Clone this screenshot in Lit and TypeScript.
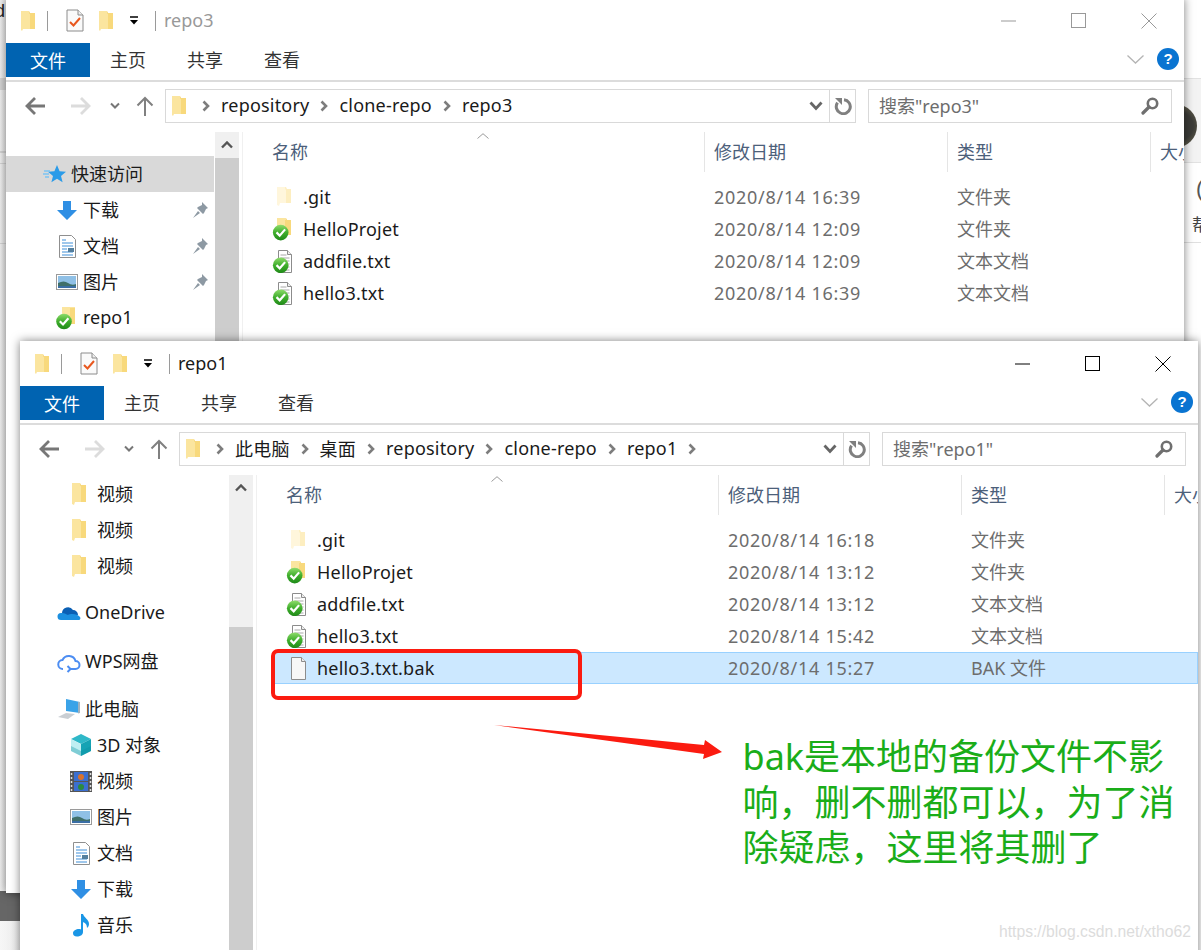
import { LitElement, html, css, svg, nothing } from "lit";
import { customElement, property } from "lit/decorators.js";

const folder = (pale = false) => svg`<svg class="ic" width="22" height="24" viewBox="0 0 22 24">
  <path d="M6 2h8l1 2h4v14H8z" fill="${pale ? "#fdf0c4" : "#f5d06a"}"/>
  <path d="M5 2h8v2l1 1v13H8l-1 3-2-1z" fill="${pale ? "#fff6dc" : "#fbe59f"}"/>
  <path d="M14 4h5v14h-5z" fill="${pale ? "#fdeec0" : "#f8d97c"}"/>
</svg>`;

const checkMark = (cx: number, cy: number) => svg`
  <defs><linearGradient id="ckg" x1="0" y1="0" x2="0" y2="1"><stop offset="0" stop-color="#8fdc6c"/><stop offset=".5" stop-color="#3fae2c"/><stop offset="1" stop-color="#1f8a18"/></linearGradient></defs>
  <circle cx="${cx}" cy="${cy}" r="7.8" fill="url(#ckg)"/>
  <path d="M${cx - 4.2} ${cy - .2}l3.200 3.200 5.400-6.200" fill="none" stroke="#fff" stroke-width="2.200"/>`;

const syncFolder = svg`<svg class="ic" width="22" height="24" viewBox="0 0 22 24">
  <path d="M6 1h8l1 2h4v15H8z" fill="#f5d06a"/><path d="M5 1h9v17H5z" fill="#fbe59f"/><path d="M13 3h6v15h-6z" fill="#f8d97c"/>
  ${checkMark(8.7, 15.6)}</svg>`;

const docLines = svg`<path d="M6.500 1.500h9l4 4v18h-13z" fill="#fff" stroke="#8c8c8c"/><path d="M15.500 1.500v4h4" fill="#eee" stroke="#8c8c8c"/>
  <path d="M8.500 6h6M8.500 9h9M8.500 12h9M8.500 15h9M8.500 18h9M8.500 21h9" stroke="#a9a9a9"/>`;

const syncDoc = svg`<svg class="ic" width="22" height="24" viewBox="0 0 22 24">${docLines}${checkMark(8.7, 16.3)}</svg>`;
const blankDoc = svg`<svg class="ic" width="22" height="24" viewBox="0 0 22 24"><path d="M5.500 1.500h10l4 4v18h-14z" fill="#f7f7f7" stroke="#8c8c8c"/><path d="M15.500 1.500v4h4" fill="#eee" stroke="#8c8c8c"/></svg>`;

const navDownload = svg`<svg class="ic" width="24" height="24" viewBox="0 0 24 24"><path d="M8 3h8v9h6l-10 10L2 12h6z" fill="#2f8fe4"/></svg>`;
const navDocs = svg`<svg class="ic" width="24" height="24" viewBox="0 0 24 24"><path d="M4.500 1.500h12l4 4v18h-16z" fill="#fff" stroke="#8f8f8f"/>
  <path d="M7 6h4M7 9h11M7 12h11M7 15h5M7 18h11M7 21h11" stroke="#3f8fd8"/><rect x="13" y="14" width="6" height="4" fill="#547f9e"/></svg>`;
const navPics = svg`<svg class="ic" width="24" height="24" viewBox="0 0 24 24"><rect x="1.500" y="4.500" width="21" height="15" fill="#fff" stroke="#9a9a9a"/>
  <rect x="3" y="6" width="18" height="12" fill="#8fc0e6"/><path d="M3 13q6-3 10 0t8 1v4H3z" fill="#3f6f6a"/><path d="M3 16h18v2H3z" fill="#3a6ea5"/></svg>`;
const navPin = svg`<svg class="pin" width="18" height="18" viewBox="0 0 18 18"><path d="M10 1l6 6-2 1-2 4-1 1-6-6 1-1 4-2zM6 10l-5 7 7-5z" fill="#8d99a3"/></svg>`;
const navStar = svg`<svg class="ic" width="24" height="24" viewBox="0 0 24 24"><path d="M14 3l2.600 6.200 6.400.5-5 4.200 1.600 6.300L14 16.800l-5.600 3.400 1.600-6.300-5-4.200 6.400-.5z" fill="#2b9be8"/><path d="M1 9h6M0 12h6M2 15h4" stroke="#7cc3f2" stroke-width="1.400"/></svg>`;
const navOneDrive = svg`<svg class="ic" width="24" height="24" viewBox="0 0 24 24"><path d="M5 12a6 6 0 0 1 11-3 5 5 0 0 1 5 5H5z" fill="#0a5fb4"/><path d="M4 19a3.500 3.500 0 0 1 0-7c3-.5 5 1 7 2 3-2 10-1 12 2 1 1.500 0 3-1 3z" fill="#1b8fe0"/></svg>`;
const navWps = svg`<svg class="ic" width="24" height="24" viewBox="0 0 24 24"><path d="M6 20a4.500 4.500 0 0 1-.5-9 7 7 0 0 1 13 1 4 4 0 0 1 0 8h-5l-3-3m3 3l-3 3" fill="none" stroke="#4c8df2" stroke-width="2"/></svg>`;
const navPc = svg`<svg class="ic" width="24" height="24" viewBox="0 0 24 24"><path d="M9 2l14 3v11L9 14z" fill="#3aa3e8"/><path d="M23 5v11l-2 .5V5z" fill="#9fb2c0"/><path d="M1 20l8-4 9 1-7 5z" fill="#c9ced3"/></svg>`;
const navCube = svg`<svg class="ic" width="24" height="24" viewBox="0 0 24 24"><path d="M12 1l10 5-10 5L2 6z" fill="#2fb8c8"/><path d="M2 6l10 5v12L2 18z" fill="#bfeef2"/><path d="M22 6l-10 5v12l10-5z" fill="#16a3b4"/><path d="M2 13l10 5 10-5v5l-10 5-10-5z" fill="#0a8ea0" opacity=".35"/></svg>`;
const navFilm = svg`<svg class="ic" width="24" height="24" viewBox="0 0 24 24"><rect x="1" y="2" width="22" height="21" fill="#555"/><rect x="5" y="3" width="14" height="9" fill="#3b6fd0"/><rect x="5" y="13" width="14" height="9" fill="#3b6fd0"/>
  <circle cx="12" cy="8" r="3" fill="#d9722b"/><circle cx="12" cy="18" r="3" fill="#2b8a3e"/><path d="M2.500 4v18M21.500 4v18" stroke="#ddd" stroke-width="1.500" stroke-dasharray="2 2"/></svg>`;
const navMusic = svg`<svg class="ic" width="24" height="24" viewBox="0 0 24 24"><path d="M12 1h2c1 4 6 5 6 10 0 2-1 3-2 4 0-4-2-5-4-6v10c0 3-3 4.500-6 4.500S4 22 4 20s3-4 6-4c1 0 2 .2 2 .5z" fill="#1a96e6"/></svg>`;
const navSyncFolder = svg`<svg class="ic" width="24" height="24" viewBox="0 0 24 24"><path d="M7 1h13v17H7z" fill="#fbe59f"/><path d="M15 2h5v16h-5z" fill="#f8d97c"/>${checkMark(9, 15.5)}</svg>`;
const navFolder = svg`<svg class="ic" width="24" height="24" viewBox="0 0 24 24"><path d="M3 1h8l1 2h5v17H6z" fill="#f5d06a"/><path d="M3 1h8v2l1 1v16H6l-1 3-2-1z" fill="#fbe59f"/><path d="M12 3h5v17h-5z" fill="#f8d97c"/></svg>`;

const titleFolder = svg`<svg width="16" height="22" viewBox="0 0 16 22"><path d="M1 1h8l1 2h5v16H3z" fill="#f5d06a"/><path d="M1 1h8v2l1 1v15H3l-1 2-1-1z" fill="#fbe59f"/><path d="M10 3h5v16h-5z" fill="#f8d97c"/></svg>`;
const titleCheck = svg`<svg width="18" height="23" viewBox="0 0 18 23"><path d="M1 1h11l5 5v16H1z" fill="#fafafa" stroke="#8c8c8c"/><path d="M12 1v5h5" fill="#eee" stroke="#8c8c8c"/><path d="M4 13l3.500 3.500L14 9" fill="none" stroke="#e8571e" stroke-width="2"/></svg>`;
const titleDrop = svg`<svg width="10" height="9" viewBox="0 0 10 9"><path d="M1 1h8" stroke="#000" stroke-width="1.500"/><path d="M1 4h8L5 8.500z" fill="#000"/></svg>`;

const arrowH = (color: string, flip = false) => svg`<svg width="20" height="18" viewBox="0 0 20 18"><path d="${flip ? "M0 9H18M10 1l8 8-8 8" : "M20 9H2M10 1L2 9l8 8"}" fill="none" stroke="${color}" stroke-width="2.800"/></svg>`;
const smallDown = svg`<svg width="10" height="8" viewBox="0 0 10 8"><path d="M1 1.500l4 4 4-4" fill="none" stroke="#777" stroke-width="2"/></svg>`;
const arrowUp = svg`<svg width="18" height="20" viewBox="0 0 18 20"><path d="M9 20V2M1.500 9.500L9 2l7.500 7.500" fill="none" stroke="#808080" stroke-width="2"/></svg>`;
const crumbSep = svg`<svg class="sep" width="8" height="12" viewBox="0 0 8 12"><path d="M1.500 1.500L6 6l-4.500 4.500" fill="none" stroke="#7d7d7d" stroke-width="2.600"/></svg>`;
const addrDown = svg`<svg width="14" height="10" viewBox="0 0 14 10"><path d="M1.500 1.500L7 7.500l5.500-6" fill="none" stroke="#666" stroke-width="2.800"/></svg>`;
const refresh = svg`<svg width="18" height="18" viewBox="0 0 18 18"><path d="M10 2.700a7 7 0 1 1-6.500 3" fill="none" stroke="#808080" stroke-width="3"/><path d="M1 1h7v7z" fill="#808080"/></svg>`;
const magnifier = svg`<svg width="18" height="18" viewBox="0 0 18 18"><circle cx="11.500" cy="6.500" r="4.700" fill="none" stroke="#6f6f6f" stroke-width="2.600"/><path d="M8 10l-6 6" stroke="#6f6f6f" stroke-width="3.200" stroke-linecap="round"/></svg>`;
const ribbonDown = svg`<svg width="17" height="9" viewBox="0 0 17 9"><path d="M.5.500l8 7.500 8-7.500" fill="none" stroke="#b4b4b4" stroke-width="1.300"/></svg>`;
const upChevron = svg`<svg width="12" height="8" viewBox="0 0 12 8"><path d="M1 6.500l5-5 5 5" fill="none" stroke="#555" stroke-width="2.400"/></svg>`;
const sortCaret = svg`<svg width="12" height="6" viewBox="0 0 12 6"><path d="M.5 5.500L6 .7l5.500 4.800" fill="none" stroke="#9a9a9a"/></svg>`;
const minBtn = (c: string) => svg`<svg width="16" height="16" viewBox="0 0 16 16"><path d="M0 8h15" stroke="${c}"/></svg>`;
const maxBtn = (c: string) => svg`<svg width="16" height="16" viewBox="0 0 16 16"><rect x=".5" y=".5" width="14" height="14" fill="none" stroke="${c}"/></svg>`;
const closeBtn = (c: string) => svg`<svg width="16" height="16" viewBox="0 0 16 16"><path d="M.5.500l15 15M15.500.500l-15 15" stroke="${c}"/></svg>`;

interface NavItem { icon: unknown; label: string; level: number; pin?: boolean; active?: boolean; gap?: string; }
interface FileRow { icon: unknown; name: string; date: string; type: string; selected?: boolean; }
interface WinCfg { title: string; active: boolean; crumbs: string[]; trailing: boolean; search: string; nav: NavItem[]; files: FileRow[]; variant: string; }

@customElement("explorer-window")
class ExplorerWindow extends LitElement {
  @property({ attribute: false }) cfg!: WinCfg;
  static styles = css`
    :host { display: block; width: 100%; height: 100%; background: #fff; overflow: hidden; font-family: "Noto Sans", "Noto Sans CJK SC", sans-serif; font-size: 18px; color: #1a1a1a; }
    svg { display: block; flex: none; }
    .titlebar { height: 45px; display: flex; align-items: center; box-sizing: border-box; padding: 0 0 0 14px; }
    .bar { width: 1px; height: 20px; background: #9a9a9a; }
    .t-f1 { margin-right: 11px; }
    .t-c { margin: 0 14px 0 18px; }
    .t-f2 { margin-right: 15px; }
    .t-d { margin-right: 16px; }
    .t-title { margin-left: 8px; line-height: 24px; margin-bottom: 2px; }
    .t-title.on { color: #1a1a1a; }
    .t-title.off { color: #999; }
    .controls { margin-left: auto; display: flex; align-items: center; padding-right: 27px; gap: 54px; }
    .tabs { height: 34px; display: flex; align-items: center; }
    .tab { line-height: 36px; margin-left: 41px; color: #333; }
    .tab.file { margin-left: 0; width: 84px; height: 34px; background: #0063b1; color: #fff; text-align: center; }
    .tab.home { margin-left: 20px; }
    .ribbon-end { margin-left: auto; display: flex; align-items: center; gap: 13px; padding-right: 5px; margin-top: -2px; }
    .help { width: 22px; height: 22px; border-radius: 50%; background: #0a74d1; color: #fff; font: bold 15px/22px "Liberation Sans", sans-serif; text-align: center; }
    .rule { height: 2px; background: #dcdcdc; margin-top: 3px; }
    .navrow { height: 34px; margin-top: 7px; display: flex; align-items: center; }
    .back { margin-left: 19px; }
    .fwd { margin-left: 26px; }
    .hist { margin-left: 19px; }
    .up { margin-left: 16px; }
    .addr { margin-left: 11px; width: 691px; height: 34px; box-sizing: border-box; border: 1px solid #d9d9d9; display: flex; align-items: center; }
    .addr .ff { margin-left: 5px; margin-right: 15px; }
    .crumb { margin: 0 11px 2px; white-space: nowrap; color: #1a1a1a; letter-spacing: .2px; }
    .crumbs { display: flex; align-items: center; flex: 1; }
    .addr-down { padding-right: 3px; width: 14px; }
    .addr-sep { width: 1px; height: 100%; background: #d9d9d9; margin-left: 3px; }
    .refresh { width: 25px; display: flex; justify-content: center; }
    .search { margin-left: 12px; width: 304px; height: 34px; box-sizing: border-box; border: 1px solid #d9d9d9; display: flex; align-items: center; padding: 0 12px 0 10px; color: #6d6d6d; justify-content: space-between; }
    .search span { margin-bottom: 2px; }
    .body { margin-top: 9px; display: flex; height: 900px; }
    .sidebar { width: 208px; flex: none; }
    .variant-a .sidebar { padding-top: 24px; }
    .variant-b .sidebar { padding-top: 1px; }
    .nav-item { height: 36px; display: flex; align-items: center; white-space: nowrap; color: #1a1a1a; }
    .nav-item.active { background: #d9d9d9; }
    .nav-item.l1 { padding-left: 37px; }
    .nav-item.l2 { padding-left: 49px; }
    .nav-item.gap-s { margin-top: 11px; }
    .nav-item.gap-m { margin-top: 12px; }
    .nav-item .lbl { margin-left: 4px; margin-bottom: 2px; }
    .nav-item .pin { margin-left: auto; margin-right: 4px; }
    .scroll { width: 24px; flex: none; margin-left: 1px; background: #f0f0f0; display: flex; flex-direction: column; }
    .scroll .btn { height: 26px; display: flex; align-items: center; justify-content: center; flex: none; }
    .scroll .thumb { flex: 1; background: #cdcdcd; margin: 0; }
    .variant-b .scroll .track { height: 126px; flex: none; }
    .main { margin-left: 3px; flex: 1; border-left: 1px solid #f0f0f0; min-width: 0; }
    .hdr { position: relative; height: 40px; display: grid; grid-template-columns: 461px 243px 203px 1fr; }
    .hcell { border-left: 1px solid #e5e5e5; padding-left: 9px; line-height: 40px; color: #4c607a; white-space: nowrap; }
    .hcell.first { border-left: 0; padding-left: 29px; }
    .caret { position: absolute; left: 234px; top: 1px; }
    .rows { margin-top: 9px; margin-left: 16px; }
    .row { height: 32px; box-sizing: border-box; display: grid; grid-template-columns: 445px 243px 1fr; align-items: center; }
    .row.selected { background: #cce8ff; box-shadow: inset 0 0 0 1px #99d1ff; }
    .name { display: flex; align-items: center; padding-left: 13px; color: #1a1a1a; white-space: nowrap; letter-spacing: .2px; }
    .name span { margin-left: 9px; }
    .date { padding-left: 10px; color: #6d6d6d; letter-spacing: .73px; }
    .type { padding-left: 10px; color: #6d6d6d; padding-bottom: 2px; }
  `;
  render() {
    const c = this.cfg;
    const col = c.active ? "#000" : "#999";
    return html`<div class="variant-${c.variant}">
      <div class="titlebar">
        <div class="t-f1">${titleFolder}</div><div class="bar"></div>
        <div class="t-c">${titleCheck}</div><div class="t-f2">${titleFolder}</div>
        <div class="t-d">${titleDrop}</div><div class="bar"></div>
        <div class="t-title ${c.active ? "on" : "off"}">${c.title}</div>
        <div class="controls">${minBtn(col)}${maxBtn(col)}${closeBtn(col)}</div>
      </div>
      <div class="tabs">
        <div class="tab file">文件</div><div class="tab home">主页</div><div class="tab">共享</div><div class="tab">查看</div>
        <div class="ribbon-end">${ribbonDown}<div class="help">?</div></div>
      </div>
      <div class="rule"></div>
      <div class="navrow">
        <div class="back">${arrowH("#777")}</div><div class="fwd">${arrowH("#dcdcdc", true)}</div>
        <div class="hist">${smallDown}</div><div class="up">${arrowUp}</div>
        <div class="addr">
          <div class="ff">${titleFolder}</div>
          <div class="crumbs">
            ${c.crumbs.map((t) => html`${crumbSep}<span class="crumb">${t}</span>`)}
            ${c.trailing ? crumbSep : nothing}
          </div>
          <div class="addr-down">${addrDown}</div><div class="addr-sep"></div><div class="refresh">${refresh}</div>
        </div>
        <div class="search"><span>${c.search}</span>${magnifier}</div>
      </div>
      <div class="body">
        <div class="sidebar">
          ${c.nav.map((n) => html`<div class="nav-item l${n.level} ${n.active ? "active" : ""} ${n.gap ?? ""}">${n.icon}<span class="lbl">${n.label}</span>${n.pin ? navPin : nothing}</div>`)}
        </div>
        <div class="scroll"><div class="btn">${upChevron}</div><div class="track"></div><div class="thumb"></div></div>
        <div class="main">
          <div class="hdr">
            <div class="caret">${sortCaret}</div>
            <div class="hcell first">名称</div><div class="hcell">修改日期</div><div class="hcell">类型</div><div class="hcell">大小</div>
          </div>
          <div class="rows">
            ${c.files.map((f) => html`<div class="row ${f.selected ? "selected" : ""}">
              <div class="name">${f.icon}<span>${f.name}</span></div>
              <div class="date">${f.date}</div><div class="type">${f.type}</div>
            </div>`)}
          </div>
        </div>
      </div>
    </div>`;
  }
}

const win1: WinCfg = {
  title: "repo3", active: false, variant: "a", crumbs: ["repository", "clone-repo", "repo3"], trailing: false, search: '搜索"repo3"',
  nav: [
    { icon: navStar, label: "快速访问", level: 1, active: true },
    { icon: navDownload, label: "下载", level: 2, pin: true },
    { icon: navDocs, label: "文档", level: 2, pin: true },
    { icon: navPics, label: "图片", level: 2, pin: true },
    { icon: navSyncFolder, label: "repo1", level: 2 },
    { icon: navFolder, label: "视频", level: 2 },
  ],
  files: [
    { icon: folder(true), name: ".git", date: "2020/8/14 16:39", type: "文件夹" },
    { icon: syncFolder, name: "HelloProjet", date: "2020/8/14 12:09", type: "文件夹" },
    { icon: syncDoc, name: "addfile.txt", date: "2020/8/14 12:09", type: "文本文档" },
    { icon: syncDoc, name: "hello3.txt", date: "2020/8/14 16:39", type: "文本文档" },
  ],
};
const win2: WinCfg = {
  title: "repo1", active: true, variant: "b", crumbs: ["此电脑", "桌面", "repository", "clone-repo", "repo1"], trailing: true, search: '搜索"repo1"',
  nav: [
    { icon: navFolder, label: "视频", level: 2 },
    { icon: navFolder, label: "视频", level: 2 },
    { icon: navFolder, label: "视频", level: 2 },
    { icon: navOneDrive, label: "OneDrive", level: 1, gap: "gap-s" },
    { icon: navWps, label: "WPS网盘", level: 1, gap: "gap-m" },
    { icon: navPc, label: "此电脑", level: 1, gap: "gap-m" },
    { icon: navCube, label: "3D 对象", level: 2 },
    { icon: navFilm, label: "视频", level: 2 },
    { icon: navPics, label: "图片", level: 2 },
    { icon: navDocs, label: "文档", level: 2 },
    { icon: navDownload, label: "下载", level: 2 },
    { icon: navMusic, label: "音乐", level: 2 },
  ],
  files: [
    { icon: folder(true), name: ".git", date: "2020/8/14 16:18", type: "文件夹" },
    { icon: syncFolder, name: "HelloProjet", date: "2020/8/14 13:12", type: "文件夹" },
    { icon: syncDoc, name: "addfile.txt", date: "2020/8/14 13:12", type: "文本文档" },
    { icon: syncDoc, name: "hello3.txt", date: "2020/8/14 15:42", type: "文本文档" },
    { icon: blankDoc, name: "hello3.txt.bak", date: "2020/8/14 15:27", type: "BAK 文件", selected: true },
  ],
};

@customElement("app-root")
class AppRoot extends LitElement {
  static styles = css`
    :host { display: block; position: relative; width: 1201px; height: 950px; overflow: hidden; background: #fff; font-family: "Noto Sans", "Noto Sans CJK SC", sans-serif; }
    .strip-left { position: absolute; left: 0; top: 0; width: 20px; height: 893px; background: linear-gradient(90deg, #f2f2f2, #dedede); overflow: hidden; }
    .strip-left i { position: absolute; left: 0; width: 20px; background: #d6d6d6; }
    .i1 { top: 78px; height: 12px; }
    .i2 { top: 151px; height: 2px; }
    .i3 { top: 163px; height: 1px; }
    .i4 { top: 243px; height: 1px; }
    .d { position: absolute; left: -5px; top: -2px; font: 18px/26px "Liberation Sans", sans-serif; color: #222; }
    .dark { position: absolute; left: 0; top: 891px; width: 20px; height: 30px; background: #666; }
    .pale { position: absolute; left: 0; top: 921px; width: 20px; height: 29px; background: linear-gradient(90deg, #f6f6f6, #ececec); }
    .strip-right { position: absolute; left: 1184px; top: 0; width: 17px; height: 341px; background: #fff; }
    .strip-right .band { position: absolute; left: 0; top: 78px; width: 17px; height: 85px; background: #f3f3f3; border-top: 1px solid #e2e2e2; border-bottom: 1px solid #e2e2e2; box-sizing: border-box; }
    .strip-right .line { position: absolute; left: 0; top: 242px; width: 17px; height: 1px; background: #e0e0e0; }
    .avatar { position: absolute; left: -31px; top: 104px; width: 44px; height: 44px; border-radius: 50%; background: radial-gradient(circle at 60% 50%, #3c3c38 40%, #6f6a52 75%, #a79b6b); }
    .paren { position: absolute; left: 12px; top: 176px; font: 22px/26px "Liberation Sans", sans-serif; color: #555; }
    .bang { position: absolute; left: 8px; top: 212px; font-size: 17px; line-height: 26px; color: #444; }
    .window { position: absolute; box-shadow: 0 0 9px rgba(0,0,0,.5); }
    .w1 { left: 6px; top: -2px; width: 1178px; height: 895px; }
    .w2 { left: 20px; top: 341px; width: 1178px; height: 640px; }
    .mark { position: absolute; left: 0; top: 0; width: 1201px; height: 950px; pointer-events: none; }
    .note { position: absolute; left: 742.500px; top: 734px; color: #1aad19; font-size: 36px; line-height: 45.500px; white-space: nowrap; }
    .note div { display: block; }
    .wm { position: absolute; left: 999px; top: 922px; font: 15.700px/20px "Liberation Sans", sans-serif; color: #dcdcdc; white-space: nowrap; }
  `;
  render() {
    return html`
      <div class="strip-left"><i class="i1"></i><i class="i2"></i><i class="i3"></i><i class="i4"></i><span class="d">d</span></div>
      <div class="dark"></div><div class="pale"></div>
      <div class="strip-right">
        <div class="band"></div><div class="line"></div><div class="avatar"></div>
        <span class="paren">(</span><span class="bang">帮</span>
      </div>
      <div class="window w1"><explorer-window .cfg=${win1}></explorer-window></div>
      <div class="window w2"><explorer-window .cfg=${win2}></explorer-window></div>
      <svg class="mark" viewBox="0 0 1201 950">
        <rect x="273" y="651" width="307" height="47" rx="5" fill="none" stroke="#fb1b10" stroke-width="4"/>
        <path d="M494 725L704 745l1-5 17 12-19 7 1-5z" fill="#fb1b10"/>
      </svg>
      <div class="note"><div>bak是本地的备份文件不影</div><div>响，删不删都可以，为了消</div><div>除疑虑，这里将其删了</div></div>
      <div class="wm">https://blog.csdn.net/xtho62</div>
    `;
  }
}
